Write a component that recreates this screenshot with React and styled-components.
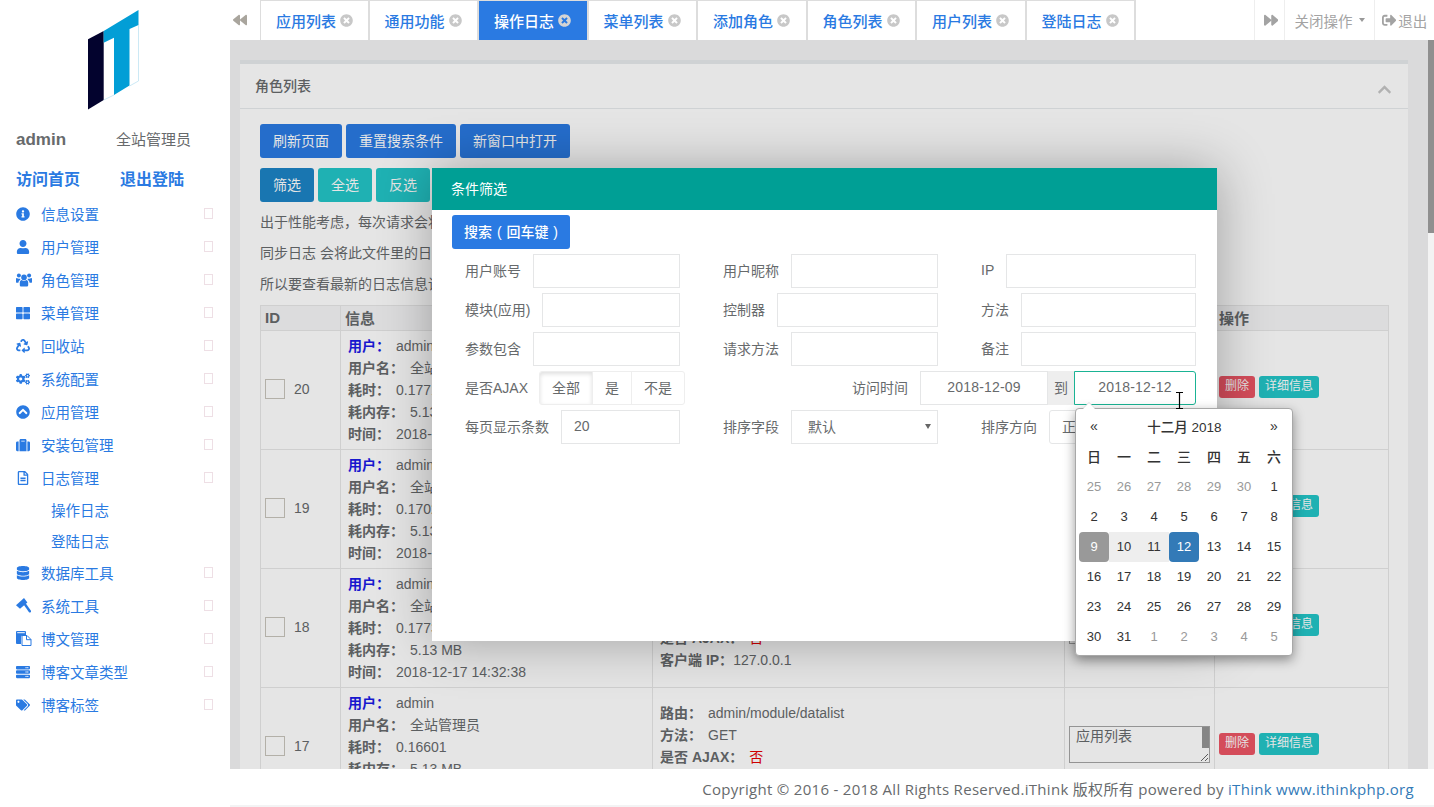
import React from "react";
import styled, { createGlobalStyle } from "styled-components";
import {
  FaInfoCircle, FaUser, FaThLarge, FaRecycle, FaCogs, FaChevronCircleUp, FaSuitcase,
  FaRegFileAlt, FaDatabase, FaServer, FaTags, FaBackward, FaForward,
  FaChevronUp, FaSignOutAlt, FaTimesCircle,
} from "react-icons/fa";

const FONT = '"Liberation Sans", "Noto Sans CJK SC", sans-serif';

const Global = createGlobalStyle`
  html, body { margin: 0; padding: 0; height: 100%; overflow: hidden; background: #fff; }
  body { font-family: ${FONT}; font-size: 14px; color: #676a6c; }
  * { box-sizing: border-box; }
`;

const Shell = styled.div`display: flex; width: 1434px; height: 807px; overflow: hidden;`;
const Sidebar = styled.aside`width: 230px; flex: none; background: #fff; color: #2a7ae2;`;
const LogoWrap = styled.div`height: 110px; padding: 10px 0 0 88px;`;
const UserRow = styled.div`display: flex; align-items: center; height: 20px; margin-top: 19px; padding-left: 16px;`;
const UserName = styled.b`width: 100px; padding-top: 1px; font-size: 17px; color: #676a6c;`;
const UserRole = styled.span`font-size: 15px; padding-bottom: 2px; color: #676a6c;`;
const LinkRow = styled.div`display: flex; align-items: center; height: 20px; margin-top: 19px; padding-left: 16px;`;
const SideLink = styled.a`width: 104px; font-size: 16px; font-weight: 700; color: #2a7ae2;`;
const Nav = styled.nav`margin-top: 9px;`;
const NavItem = styled.div`display: flex; align-items: center; height: 33px; padding: 0 17px 0 16px; font-size: 14.5px;`;
const NavIcon = styled.span`display: flex; align-items: center; width: 25px; font-size: 14px;`;
const NavLabel = styled.span`flex: 1;`;
const Tofu = styled.i`width: 9px; height: 11px; border: 1px solid #eedfe5;`;
const SubItem = styled.div`display: flex; align-items: center; height: 31px; padding: 0 0 0 51px; font-size: 14.5px;`;

const Main = styled.main`flex: 1; min-width: 0; display: flex; flex-direction: column;`;
const TopBar = styled.header`display: flex; height: 40px; flex: none; background: #fff; color: #999;`;
const ArrowCell = styled.div`display: flex; align-items: center; width: 30px; padding-left: 3px; font-size: 14px; color: #a9a59d;`;
const Tabs = styled.div`flex: 1; display: flex;`;
const Tab = styled.div`
  display: flex; align-items: center; width: 109.5px; padding-left: 15px; gap: 4px;
  border-top: 1px solid #ddd; border-right: 2px solid #ddd; border-left: ${p => (p.$first ? "1px solid #ddd" : "0")};
  font-size: 15px; font-weight: 500; white-space: nowrap;
  background: ${p => (p.$active ? "#2a7ae2" : "#fff")};
  color: ${p => (p.$active ? "#fff" : "#2a7ae2")};
  svg { font-size: 13px; color: ${p => (p.$active ? "#d4d4d4" : "#c8c8c8")}; }
`;
const ToolCell = styled.div`
  display: flex; align-items: center; justify-content: center; width: ${p => p.$w}px; gap: 2px; padding-left: ${p => p.$pad || 0}px;
  border-left: 1px solid #eee; font-size: 14.5px; color: #a3a3a3;
`;
const Caret = styled.i`width: 0; height: 0; border: 3.5px solid transparent; border-top: 4px solid #999; border-bottom: 0; margin-left: 4px;`;

const Content = styled.div`position: relative; flex: 1; min-height: 0; overflow: hidden; background: #f3f3f4; padding: 20px 26px 0 10px;`;
const Shade = styled.div`position: absolute; inset: 0; background: rgba(0,0,0,.1);`;
const Thumb = styled.div`position: absolute; top: 0; right: 0; width: 6px; height: 193px; background: #8f8f8f;`;
const Track = styled.div`position: absolute; top: 0; right: 0; bottom: 0; width: 6px; background: #f3f3f3;`;
const Panel = styled.section`background: #fff; border-top: 4px solid #e7eaec;`;
const PanelHead = styled.div`
  display: flex; align-items: center; justify-content: space-between; height: 45px; padding: 0 16px 3px 15px;
  border-bottom: 1px solid #e7eaec; font-weight: 500; color: #676a6c; svg { color: #c6c6c6; font-size: 15px; margin-top: 9px; }
`;
const PanelBody = styled.div`padding: 15px 20px;`;
const BtnRow = styled.div`display: flex; gap: 4px; margin-bottom: 10px;`;
const Btn = styled.button`
  height: 34px; padding: 0 13px 2px; border: 0; border-radius: 3px; font: 14px ${FONT}; color: #fff;
  background: ${p => p.$bg};
`;
const Note = styled.p`margin: 0 0 11px; line-height: 20px; white-space: nowrap;`;
const Table = styled.table`
  width: 1128px; border-collapse: collapse; table-layout: fixed; font-size: 14px;
  th, td { border: 1px solid #e7e7e7; padding: 0; }
  th { height: 25px; padding: 0 0 2px 4px; text-align: left; font-size: 15px; font-weight: 700; color: #676a6c; background: #f5f5f6; }
`;
const InfoCell = styled.td`&& { padding: ${p => p.$pad || "4px 7px"}; vertical-align: middle; line-height: 22px; }`;
const InfoLine = styled.div`white-space: nowrap;`;
const Key = styled.b`font-weight: 700; margin-right: ${p => (p.$m === undefined ? 6 : p.$m)}px; color: ${p => p.$c || "#676a6c"};`;
const No = styled.span`color: #e60000;`;
const IdWrap = styled.div`display: flex; align-items: center; gap: 9px; padding-left: 4px; margin-bottom: 3px;`;
const Check = styled.span`width: 20px; height: 20px; background: #fff; border: 1px solid #c8c5bc;`;
const NoteWrap = styled.div`
  position: relative; width: 141px; height: 37px; margin: 0 0 6px 4px;
  &::after { content: ""; position: absolute; top: 1px; right: 1px; width: 7px; height: 21px; background: #959595; }
`;
const NoteBox = styled.textarea`
  display: block; width: 141px; height: 37px; padding: 0 6px; border: 1px solid #a5a5a5;
  background: #fff; font: 14px/18px ${FONT}; color: #676a6c; overflow: hidden; outline: none;
`;
const ActWrap = styled.div`display: flex; gap: 4px; padding-left: 4px; margin-bottom: 6px;`;
const MiniBtn = styled.span`
  height: 22px; padding: 0 6px; border-radius: 3px; font-size: 12px; line-height: 20px; color: #fff; background: ${p => p.$bg};
`;

const Modal = styled.div`
  position: absolute; left: 202px; top: 128px; width: 785px; height: 473px; background: #fff;
  box-shadow: 1px 1px 50px rgba(0,0,0,.3);
`;
const ModalHead = styled.div`height: 42px; padding-left: 19px; line-height: 42px; font-size: 14px; color: #fff; background: #009f95;`;
const ModalBody = styled.div`padding: 5px 21px 0 20px;`;
const SearchBtn = styled.button`
  display: block; height: 34px; width: 118px; padding: 0 0 2px; border: 0; border-radius: 3px; word-spacing: 1px;
  font: 500 14px ${FONT}; color: #fff; background: #2a7ae2;
`;
const FormGrid = styled.div`
  display: grid; grid-template-columns: 215px 215px 215px; column-gap: 43px; row-gap: 5px; margin: 5px 0 0 13px;
`;
const Field = styled.div`display: flex; align-items: center; gap: 12px; height: 34px; white-space: nowrap; min-width: 0;`;
const FieldLabel = styled.span`padding-bottom: 2px;`;
const WideField = styled(Field)`grid-column: 2 / 4; justify-content: flex-end;`;
const Input = styled.input`
  flex: 1; min-width: 0; height: 34px; padding: 0 12px 2px; border: 1px solid #e5e6e7; background: #fff;
  font: 14px ${FONT}; color: #676a6c; outline: none;
`;
const BtnGroup = styled.div`display: flex; flex: none; height: 34px; margin-left: -1px;`;
const GroupBtn = styled.span`
  display: flex; align-items: center; justify-content: center; width: ${p => p.$w}px; padding-bottom: 2px; border: 1px solid #eee; margin-left: -1px;
  box-shadow: ${p => (p.$on ? "inset 0 2px 4px rgba(0,0,0,.13)" : "none")};
  &:first-child { border-radius: 3px 0 0 3px; margin-left: 0; }
  &:last-child { border-radius: 0 3px 3px 0; }
`;
const DateGroup = styled.div`display: flex; height: 34px; width: 276px; flex: none;`;
const DateInput = styled.input`
  width: ${p => p.$w}px; height: 34px; padding: 0 0 2px; text-align: center; font: 14px ${FONT}; color: #676a6c; letter-spacing: .2px;
  border: 1px solid ${p => (p.$focus ? "#1ab394" : "#e5e6e7")}; border-radius: ${p => (p.$focus ? "0 3px 3px 0" : "0")}; outline: none;
`;
const DateAddon = styled.span`display: flex; align-items: center; justify-content: center; width: 26px; padding-bottom: 2px; background: #eee;`;
const SelectWrap = styled.div`
  position: relative; flex: 1; height: 34px; min-width: 0;
  &::after { content: ""; position: absolute; right: 7px; top: 14px; border: 3px solid transparent; border-top: 5px solid #666; border-bottom: 0; }
`;
const Select = styled.select`
  appearance: none; width: 100%; height: 34px; padding-left: ${p => p.$pad}px; border: 1px solid #e5e6e7; background: #fff;
  border-radius: ${p => (p.$round ? "3px" : "0")}; font: 14px ${FONT}; color: #676a6c; outline: none;
`;

const Calendar = styled.div`
  position: absolute; left: 643px; top: 240px; width: 218px; height: 248px; padding: 3px; background: #fff;
  border: 1px solid #a8a8a8; border-radius: 4px; box-shadow: 0 4px 12px rgba(0,0,0,.4); z-index: 2;
  &::before {
    content: ""; position: absolute; top: -6px; left: 7px; border: 6px solid transparent; border-top: 0; border-bottom-color: #fff;
    filter: drop-shadow(0 -1px 0 #ddd);
  }
`;
const CalGrid = styled.div`display: grid; grid-template-columns: repeat(7, 30px); grid-auto-rows: 30px;`;
const CalCell = styled.div`
  display: flex; align-items: center; justify-content: center; padding-bottom: 1px; font-size: 13px;
  color: ${p => ({ old: "#999", start: "#fff", end: "#fff" }[p.$kind] || "#333")};
  background: ${p => ({ start: "#999", end: "#337ab7", range: "#eee" }[p.$kind] || "transparent")};
  border-radius: ${p => (p.$kind === "start" || p.$kind === "end" ? "4px" : "0")};
`;
const CalHead = styled.div`display: flex; align-items: center; justify-content: center; padding-bottom: 3px; font-size: 14px; font-weight: 500; color: #333;`;
const CalTitle = styled.div`grid-column: 2 / 7; display: flex; align-items: center; justify-content: center; padding: 0 0 2px 1px; font-size: 13.5px; font-weight: 500; color: #333;`;
const Cursor = styled.svg`position: absolute; left: 743px; top: 224px; width: 9px; height: 17px; z-index: 3;`;

const Footer = styled.footer`
  display: flex; align-items: center; justify-content: flex-end; height: 38px; flex: none; padding: 3px 20px 0 0; letter-spacing: .3px;
  background: #fff; border-bottom: 2px solid #f3f3f4; font: 15px "Open Sans", "Noto Sans CJK SC", sans-serif; color: #676a6c;
`;
const FootLink = styled.a`color: #337ab7;`;

const Logo = () => (
  <svg width="52" height="100" viewBox="88 10 52 100">
    <polygon points="88,39.3 103.7,31 103.7,100 88,109.5" fill="#03032e" />
    <polygon points="103.7,31 138.5,10 138.5,25 129.5,29 129.5,85.5 114,95 114,37.7 103.7,42.7" fill="#029ed6" />
    <polyline points="138.5,25 138.5,81 129.5,86" fill="none" stroke="#bfe3f3" strokeWidth=".8" />
    <line x1="114" y1="95" x2="103.7" y2="100" stroke="#bfe3f3" strokeWidth=".8" />
  </svg>
);

const UsersIcon = () => (
  <svg width="16" height="14" viewBox="0 0 16 14" fill="currentColor">
    <circle cx="8" cy="4.4" r="2.8" />
    <circle cx="2.9" cy="2.6" r="2" />
    <circle cx="13.1" cy="2.6" r="2" />
    <path d="M3.8 9.6C3.8 7.9 4.8 7 5.8 7c.6.6 1.3 1 2.2 1s1.6-.4 2.2-1c1 0 2 .9 2 2.6V12c0 1-.7 1.6-1.6 1.6H5.4c-.9 0-1.6-.6-1.6-1.6V9.6z" />
    <path d="M.0 5.8C.0 5.3.5 4.9.9 4.9c.5.5 1.2.8 2 .8.5 0 1-.1 1.3-.3-.2.6-.1 1.1.2 1.6-1.1.3-1.9 1.4-2 2.8H.9C.4 9.8 0 9.4 0 8.9V5.8zM16 5.8c0-.5-.5-.9-.9-.9-.5.5-1.2.8-2 .8-.5 0-1-.1-1.3-.3.2.6.1 1.1-.2 1.6 1.1.3 1.9 1.4 2 2.8h1.5c.5 0 .9-.4.9-.9V5.8z" />
  </svg>
);
const GavelIcon = () => (
  <svg width="15" height="15" viewBox="0 0 15 15" fill="currentColor">
    <path d="M0 7.2 8 0l3.4 4.6-7.4 6.2z" />
    <path d="M7.6 6.6 9.5 5l5.3 7.6c.4.6.3 1.2-.2 1.7-.5.4-1.1.4-1.6-.1z" />
  </svg>
);
const FilesIcon = () => (
  <svg width="16" height="15" viewBox="0 0 16 15">
    <path d="M0 1a1 1 0 0 1 1-1h8a1 1 0 0 1 1 1v3H6.5L5 5.5V13H1a1 1 0 0 1-1-1z" fill="currentColor" />
    <path d="M6 4.5h5l4 4v6H6z" fill="#fff" stroke="currentColor" strokeWidth="1" />
    <path d="M10.5 4.5v4.2h4.5" fill="none" stroke="currentColor" strokeWidth="1" />
    <rect x="1.2" y="1.2" width="7.6" height="1" fill="#fff" />
  </svg>
);

const menu = [
  [FaInfoCircle, "信息设置"], [FaUser, "用户管理"], [UsersIcon, "角色管理"], [FaThLarge, "菜单管理"],
  [FaRecycle, "回收站"], [FaCogs, "系统配置"], [FaChevronCircleUp, "应用管理"], [FaSuitcase, "安装包管理"],
  [FaRegFileAlt, "日志管理", ["操作日志", "登陆日志"]], [FaDatabase, "数据库工具"], [GavelIcon, "系统工具"],
  [FilesIcon, "博文管理"], [FaServer, "博客文章类型"], [FaTags, "博客标签"],
];
const tabs = ["应用列表", "通用功能", "操作日志", "菜单列表", "添加角色", "角色列表", "用户列表", "登陆日志"];
const rows = [
  { id: 20, cost: "0.17712", time: "2018-12-17 14:35:21" },
  { id: 19, cost: "0.17023", time: "2018-12-17 14:33:02" },
  { id: 18, cost: "0.17731", time: "2018-12-17 14:32:38" },
  { id: 17, cost: "0.16601", time: "2018-12-17 14:32:36" },
];
const weekdays = ["日", "一", "二", "三", "四", "五", "六"];
const prev = [25, 26, 27, 28, 29, 30];
const next = [1, 2, 3, 4, 5];
const kindOf = d => (d === 9 ? "start" : d === 12 ? "end" : d === 10 || d === 11 ? "range" : undefined);

const Labeled = ({ label, value }) => (
  <Field>
    <FieldLabel>{label}</FieldLabel>
    <Input defaultValue={value || ""} readOnly />
  </Field>
);

export default function App() {
  return (
    <Shell>
      <Global />
      <Sidebar>
        <LogoWrap><Logo /></LogoWrap>
        <UserRow><UserName>admin</UserName><UserRole>全站管理员</UserRole></UserRow>
        <LinkRow><SideLink>访问首页</SideLink><SideLink>退出登陆</SideLink></LinkRow>
        <Nav>
          {menu.map(([Icon, label, subs]) => (
            <React.Fragment key={label}>
              <NavItem>
                <NavIcon><Icon /></NavIcon>
                <NavLabel>{label}</NavLabel>
                <Tofu />
              </NavItem>
              {subs && subs.map(s => <SubItem key={s}>{s}</SubItem>)}
            </React.Fragment>
          ))}
        </Nav>
      </Sidebar>
      <Main>
        <TopBar>
          <ArrowCell><FaBackward /></ArrowCell>
          <Tabs>
            {tabs.map((t, i) => (
              <Tab key={t} $first={i === 0} $active={i === 2}>{t}<FaTimesCircle /></Tab>
            ))}
          </Tabs>
          <ToolCell $w={30} $pad={3}><FaForward /></ToolCell>
          <ToolCell $w={90}>关闭操作<Caret /></ToolCell>
          <ToolCell $w={60}><FaSignOutAlt />退出</ToolCell>
        </TopBar>
        <Content>
          <Panel>
            <PanelHead>角色列表<FaChevronUp /></PanelHead>
            <PanelBody>
              <BtnRow>
                <Btn $bg="#2a7ae2">刷新页面</Btn>
                <Btn $bg="#2a7ae2">重置搜索条件</Btn>
                <Btn $bg="#2a7ae2">新窗口中打开</Btn>
              </BtnRow>
              <BtnRow>
                <Btn $bg="#1c84c6">筛选</Btn>
                <Btn $bg="#23c6c8">全选</Btn>
                <Btn $bg="#23c6c8">反选</Btn>
              </BtnRow>
              <Note>出于性能考虑，每次请求会将日志先写入文件</Note>
              <Note>同步日志 会将此文件里的日志同步到数据库</Note>
              <Note>所以要查看最新的日志信息请先同步日志</Note>
              <Table>
                <colgroup>
                  <col style={{ width: 80 }} /><col style={{ width: 312 }} /><col style={{ width: 412 }} />
                  <col style={{ width: 150 }} /><col style={{ width: 174 }} />
                </colgroup>
                <thead>
                  <tr><th>ID</th><th>信息</th><th>请求</th><th>备注</th><th>操作</th></tr>
                </thead>
                <tbody>
                  {rows.map(r => (
                    <tr key={r.id}>
                      <td><IdWrap><Check />{r.id}</IdWrap></td>
                      <InfoCell>
                        <InfoLine><Key $c="#1a1ae6">用户：</Key>admin</InfoLine>
                        <InfoLine><Key>用户名：</Key>全站管理员</InfoLine>
                        <InfoLine><Key>耗时：</Key>{r.cost}</InfoLine>
                        <InfoLine><Key>耗内存：</Key>5.13 MB</InfoLine>
                        <InfoLine><Key>时间：</Key>{r.time}</InfoLine>
                      </InfoCell>
                      <InfoCell $pad="3px 7px 5px">
                        <InfoLine><Key>路由：</Key>admin/module/datalist</InfoLine>
                        <InfoLine><Key>方法：</Key>GET</InfoLine>
                        <InfoLine><Key>是否 AJAX：</Key><No>否</No></InfoLine>
                        <InfoLine><Key $m={0}>客户端 IP：</Key>127.0.0.1</InfoLine>
                      </InfoCell>
                      <td><NoteWrap><NoteBox readOnly defaultValue="应用列表" /></NoteWrap></td>
                      <td>
                        <ActWrap>
                          <MiniBtn $bg="#ed5565">删除</MiniBtn>
                          <MiniBtn $bg="#23c6c8">详细信息</MiniBtn>
                        </ActWrap>
                      </td>
                    </tr>
                  ))}
                </tbody>
              </Table>
            </PanelBody>
          </Panel>
          <Shade />
          <Track />
          <Thumb />
          <Modal>
            <ModalHead>条件筛选</ModalHead>
            <ModalBody>
              <SearchBtn>搜索 ( 回车键 )</SearchBtn>
              <FormGrid>
                <Labeled label="用户账号" /><Labeled label="用户昵称" /><Labeled label="IP" />
                <Labeled label="模块(应用)" /><Labeled label="控制器" /><Labeled label="方法" />
                <Labeled label="参数包含" /><Labeled label="请求方法" /><Labeled label="备注" />
                <Field>
                  <FieldLabel>是否AJAX</FieldLabel>
                  <BtnGroup>
                    <GroupBtn $w={54} $on>全部</GroupBtn>
                    <GroupBtn $w={40}>是</GroupBtn>
                    <GroupBtn $w={54}>不是</GroupBtn>
                  </BtnGroup>
                </Field>
                <WideField>
                  <FieldLabel>访问时间</FieldLabel>
                  <DateGroup>
                    <DateInput $w={128} readOnly defaultValue="2018-12-09" />
                    <DateAddon>到</DateAddon>
                    <DateInput $w={122} $focus readOnly defaultValue="2018-12-12" />
                  </DateGroup>
                </WideField>
                <Labeled label="每页显示条数" value="20" />
                <Field>
                  <FieldLabel>排序字段</FieldLabel>
                  <SelectWrap><Select $pad={16}><option>默认</option></Select></SelectWrap>
                </Field>
                <Field>
                  <FieldLabel>排序方向</FieldLabel>
                  <SelectWrap><Select $pad={12} $round><option>正序</option></Select></SelectWrap>
                </Field>
              </FormGrid>
            </ModalBody>
            <Cursor viewBox="0 0 9 17">
              <path d="M1 .5h7M1 16.5h7M4.5 1v15" stroke="#000" strokeWidth="1.2" fill="none" />
            </Cursor>
            <Calendar>
              <CalGrid>
                <CalHead>«</CalHead>
                <CalTitle>十二月 2018</CalTitle>
                <CalHead>»</CalHead>
                {weekdays.map(w => <CalHead key={w}>{w}</CalHead>)}
                {prev.map(d => <CalCell key={"p" + d} $kind="old">{d}</CalCell>)}
                {Array.from({ length: 31 }, (_, i) => i + 1).map(d => (
                  <CalCell key={d} $kind={kindOf(d)}>{d}</CalCell>
                ))}
                {next.map(d => <CalCell key={"n" + d} $kind="old">{d}</CalCell>)}
              </CalGrid>
            </Calendar>
          </Modal>
        </Content>
        <Footer>
          Copyright © 2016 - 2018 All Rights Reserved.iThink 版权所有 powered by&nbsp;<FootLink>iThink www.ithinkphp.org</FootLink>
        </Footer>
      </Main>
    </Shell>
  );
}
